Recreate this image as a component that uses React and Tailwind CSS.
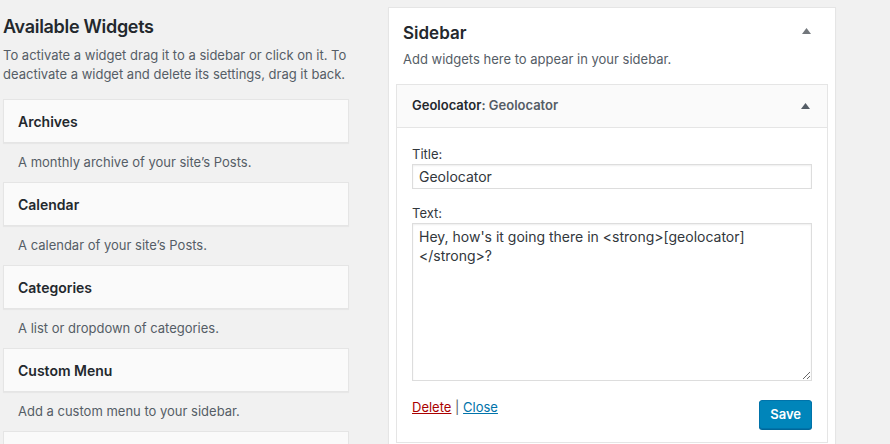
import React from "react";

const availableWidgets = [
    { name: "Archives", des: "A monthly archive of your site\u2019s Posts." },
    { name: "Calendar", des: "A calendar of your site\u2019s Posts." },
    { name: "Categories", des: "A list or dropdown of categories." },
    { name: "Custom Menu", des: "Add a custom menu to your sidebar." },
];

const Arrow = ({ color = "#72777c" }) => (
    <svg width="9" height="6" viewBox="0 0 9 6">
        <path d="M4.5 0 L9 6 L0 6 Z" fill={color} />
    </svg>
);

const WidgetCard = ({ name, des }) => {
    return (
        <div>
            <div className="h-[44px] flex items-center pl-[14px] bg-[#fafafa] border border-[#e5e5e5] shadow-[0_1px_1px_rgba(0,0,0,0.04)]">
                <h3 className="text-[14px] font-semibold text-[#23282d]">{name}</h3>
            </div>
            <div className="h-[39px] flex items-center pl-[15px] text-[13px] text-[#555d66]">
                {des}
            </div>
        </div>
    );
};

const App = () => {
    return (
        <div
            className="w-[890px] h-[444px] overflow-hidden bg-[#f1f1f1] flex text-[#23282d]"
            style={{ fontFamily: "Inter, 'Noto Sans', sans-serif" }}
        >
            {/* available widgets */}
            <div className="w-[346px] ml-[3px] shrink-0">
                <h2 className="mt-[14px] text-[18px] leading-[26px] font-semibold tracking-[-0.3px]">Available Widgets</h2>
                <p className="mt-[6px] text-[13px] leading-[19px] text-[#555d66]">
                    To activate a widget drag it to a sidebar or click on it. To
                    <br />
                    deactivate a widget and delete its settings, drag it back.
                </p>
                <div className="mt-[15px]">
                    {availableWidgets.map((w, i) => (
                        <WidgetCard key={i} name={w.name} des={w.des} />
                    ))}
                    {/* next card, only its top shows */}
                    <div className="h-[44px] bg-[#fafafa] border border-[#e5e5e5]" />
                </div>
            </div>

            {/* sidebar area */}
            <div className="ml-[39px] mt-[7px] w-[448px] shrink-0 self-start bg-white border border-[#e5e5e5] shadow-[0_1px_1px_rgba(0,0,0,0.04)] pb-[20px]">
                <div className="flex items-start justify-between pl-[14px] pr-[24px] pt-[12px]">
                    <h2 className="text-[17px] leading-[26px] font-semibold">Sidebar</h2>
                    <div className="pt-[8px]">
                        <Arrow />
                    </div>
                </div>
                <p className="pl-[14px] mt-[4px] text-[13px] leading-[18px] text-[#555d66]">
                    Add widgets here to appear in your sidebar.
                </p>

                <div className="mx-[7px] mt-[16px] border border-[#e5e5e5]">
                    <div className="h-[43px] flex items-center justify-between pl-[15px] pr-[17px] bg-[#fafafa] border-b border-[#e5e5e5]">
                        <h3 className="text-[13px] font-semibold">
                            Geolocator<span className="text-[#555d66]">: Geolocator</span>
                        </h3>
                        <Arrow color="#555d66" />
                    </div>

                    <div className="px-[15px] pt-[17px] pb-[13px]">
                        <label className="block text-[13px] leading-[18px] text-[#32373c]">Title:</label>
                        <input
                            type="text"
                            defaultValue="Geolocator"
                            className="mt-[1px] block w-full h-[25px] px-[6px] text-[14px] text-[#32373c] border border-[#ddd] shadow-[inset_0_1px_2px_rgba(0,0,0,0.07)] outline-none"
                        />

                        <label className="block mt-[15px] text-[13px] leading-[18px] text-[#32373c]">Text:</label>
                        <textarea
                            defaultValue={"Hey, how's it going there in <strong>[geolocator]\n</strong>?"}
                            className="mt-[1px] block w-full h-[158px] px-[6px] py-[3px] text-[14px] leading-[19px] text-[#32373c] border border-[#ddd] shadow-[inset_0_1px_2px_rgba(0,0,0,0.07)] outline-none resize-y"
                        />

                        <div className="mt-[19px] flex items-start justify-between">
                            <div className="mt-[-2px] text-[13px] text-[#555d66]">
                                <a href="#" className="text-[#a00] underline">Delete</a>
                                <span> | </span>
                                <a href="#" className="text-[#0073aa] underline">Close</a>
                            </div>
                            <button className="h-[29px] px-[10px] rounded-[3px] bg-[#0085ba] border border-[#0073aa] shadow-[0_1px_0_#006799] text-white text-[13px] font-semibold">
                                Save
                            </button>
                        </div>
                    </div>
                </div>
            </div>
        </div>
    );
};

export default App;
